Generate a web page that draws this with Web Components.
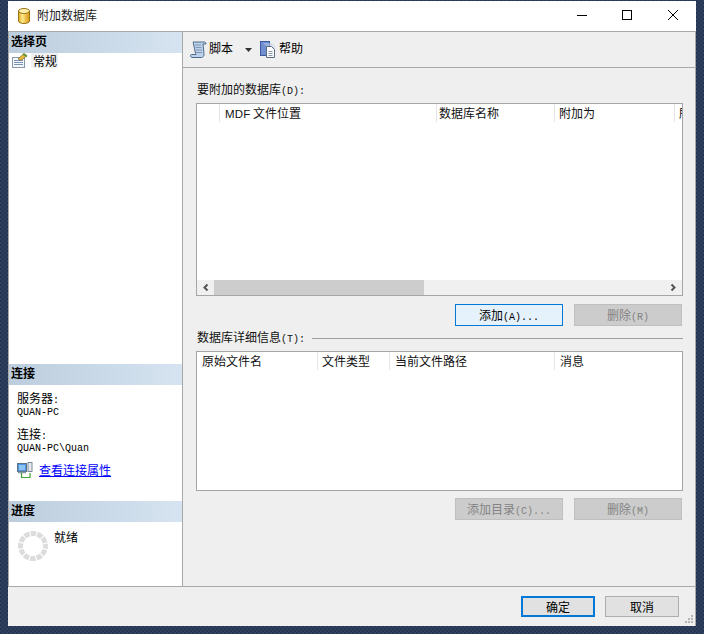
<!DOCTYPE html>
<html lang="zh">
<head>
<meta charset="utf-8">
<title>附加数据库</title>
<style>
    html, body { margin: 0; height: 100%; }
    body {
        box-sizing: border-box;
        padding: 1px 8px 8px 8px;
        background: repeating-conic-gradient(#2f4160 0 25%, #263650 0 50%) 0 0 / 4px 4px;
        font: 12px/12px "Noto Sans CJK SC", "Liberation Sans", sans-serif;
        color: #000;
    }
</style>
</head>
<body>
<attach-dialog>
    <nav-section slot="nav" heading="选择页" grow>
        <page-item>常规</page-item>
    </nav-section>
    <nav-section slot="nav" heading="连接" style="height:137px">
        <conn-info></conn-info>
    </nav-section>
    <nav-section slot="nav" heading="进度" style="height:85px">
        <progress-info>就绪</progress-info>
    </nav-section>

    <tool-bar slot="main"></tool-bar>
    <div slot="main" style="padding:15px 12px 0 13px">
        <div style="height:20px;padding-left:1px;color:#111">要附加的数据库<l-t>(D):</l-t></div>
        <data-grid style="height:193px" scroll>
            <grid-col w="23"></grid-col>
            <grid-col w="217"><span style="font:11.5px/12px 'Liberation Sans',sans-serif;letter-spacing:.15px">MDF</span> 文件位置</grid-col>
            <grid-col w="118" pad="2">数据库名称</grid-col>
            <grid-col w="120" pad="4">附加为</grid-col>
            <grid-col w="60" pad="4" last>所有者</grid-col>
        </data-grid>
        <btn-row style="margin-top:8px">
            <dlg-btn variant="focus"><span>添加<l-t>(A)...</l-t></span></dlg-btn>
            <dlg-btn disabled><span>删除<l-t>(R)</l-t></span></dlg-btn>
        </btn-row>
        <group-rule style="margin-top:6px">数据库详细信息<l-t>(T):</l-t></group-rule>
        <data-grid style="height:140px;margin-top:6px">
            <grid-col w="121">原始文件名</grid-col>
            <grid-col w="72" pad="4">文件类型</grid-col>
            <grid-col w="165">当前文件路径</grid-col>
            <grid-col w="120" last>消息</grid-col>
        </data-grid>
        <btn-row style="margin-top:7px">
            <dlg-btn disabled><span>添加目录<l-t>(C)...</l-t></span></dlg-btn>
            <dlg-btn disabled><span>删除<l-t>(M)</l-t></span></dlg-btn>
        </btn-row>
    </div>

    <dlg-btn slot="foot" variant="default" style="width:74px;height:21px;padding-top:0">确定</dlg-btn>
    <dlg-btn slot="foot" variant="plain" style="width:74px;height:21px;padding-top:0">取消</dlg-btn>
</attach-dialog>

<script>
/* half-width latin in the bitmap-font look: 6px per char */
class LatinText extends HTMLElement {
    constructor() {
        super();
        this.attachShadow({ mode: 'open' }).innerHTML =
            `<style>:host { display: inline; font: 10px/12px "Liberation Mono", monospace; }</style><slot></slot>`;
    }
}

class AttachDialog extends HTMLElement {
    constructor() {
        super();
        this.attachShadow({ mode: 'open' }).innerHTML = `
            <style>
                :host { display: flex; flex-direction: column; height: 625px; background: #efefef; position: relative; }
                .title { height: 30px; flex: none; background: #fff; display: flex; align-items: center; border-bottom: 1px solid #a9a9a9; }
                .title svg.db { margin-left: 10px; }
                .title span { margin: 0 0 2px 7px; color: #1a1a1a; }
                .ctl { margin-left: auto; display: flex; }
                .ctl svg { display: block; }
                .body { flex: none; height: 554px; display: flex; border-bottom: 1px solid #a9a9a9; }
                .nav { width: 173px; flex: none; background: #fff; border-left: 1px solid #a9a9a9; border-right: 1px solid #a9a9a9; display: flex; flex-direction: column; }
                .main { flex: 1; min-width: 0; border-right: 1px solid #a9a9a9; }
                .foot { flex: 1; display: flex; justify-content: flex-end; gap: 10px; padding: 9px 16px 0 0; box-sizing: border-box; border-right: 1px solid #a9a9a9; }
                .grip { position: absolute; right: 2px; bottom: 2px; }
            </style>
            <div class="title">
                <svg class="db" width="12" height="16" viewBox="0 0 12 16">
                    <defs><linearGradient id="g" x1="0" x2="1"><stop offset="0" stop-color="#e0a91e"/><stop offset=".35" stop-color="#ffe98a"/><stop offset="1" stop-color="#d9940f"/></linearGradient></defs>
                    <path d="M.5 3v10c0 1.4 2.5 2.5 5.5 2.5s5.5-1.100 5.5-2.500V3z" fill="url(#g)" stroke="#9a7415"/>
                    <ellipse cx="6" cy="3" rx="5.500" ry="2.500" fill="#fff1ad" stroke="#9a7415"/>
                </svg>
                <span>附加数据库</span>
                <svg class="ctl" width="128" height="30" viewBox="0 0 128 30" fill="none" stroke="#000">
                    <path d="M9 14.500h10"/>
                    <rect x="54.500" y="9.500" width="9" height="9"/>
                    <path d="M100 9l10 10M110 9l-10 10"/>
                </svg>
            </div>
            <div class="body">
                <div class="nav"><slot name="nav"></slot></div>
                <div class="main"><slot name="main"></slot></div>
            </div>
            <div class="foot"><slot name="foot"></slot></div>
            <svg class="grip" width="9" height="9" viewBox="0 0 9 9" fill="#b4b4b4">
                <rect x="6" y="0" width="2" height="2"/><rect x="3" y="3" width="2" height="2"/><rect x="6" y="3" width="2" height="2"/>
                <rect x="0" y="6" width="2" height="2"/><rect x="3" y="6" width="2" height="2"/><rect x="6" y="6" width="2" height="2"/>
            </svg>`;
    }
}

class NavSection extends HTMLElement {
    connectedCallback() {
        if (this.shadowRoot) return;
        this.attachShadow({ mode: 'open' }).innerHTML = `
            <style>
                :host { display: block; flex: none; }
                :host([grow]) { flex: 1; }
                .head {
                    height: 21px; padding: 0 0 3px 2px; box-sizing: border-box; display: flex; align-items: center;
                    background: linear-gradient(90deg, #bccddd, #d6e4f1);
                    font-weight: 700; font-size: 12px;
                }
            </style>
            <div class="head">${this.getAttribute('heading')}</div>
            <slot></slot>`;
    }
}

class PageItem extends HTMLElement {
    constructor() {
        super();
        this.attachShadow({ mode: 'open' }).innerHTML = `
            <style>
                :host { display: flex; align-items: center; height: 15px; padding-left: 3px; }
                svg { flex: none; }
                span { margin-left: 3px; padding: 0 1px 0 2px; height: 15px; line-height: 15px; background: #f0f0f0; }
            </style>
            <svg width="16" height="15" viewBox="0 0 16 15">
                <rect x=".5" y="4.500" width="12" height="10" fill="#f4f7fb" stroke="#8a97a6"/>
                <path d="M2 7.500h9M2 9.500h9M2 11.500h9" stroke="#7b93b5"/>
                <path d="M6 6l6-5.500 3 2-6 5z" fill="#e9b93a" stroke="#7a6a2c" stroke-width=".7"/>
                <path d="M11 1l4 2.500" stroke="#5d9a3c" stroke-width="1.500"/>
            </svg>
            <span><slot></slot></span>`;
    }
}

class ConnInfo extends HTMLElement {
    constructor() {
        super();
        this.attachShadow({ mode: 'open' }).innerHTML = `
            <style>
                :host { display: block; padding: 7px 0 0 8px; line-height: 12px; }
                div { height: 12px; }
                .link { display: flex; align-items: center; margin-top: 10px; height: 17px; }
                a { margin: 0 0 1px 6px; color: #0000ff; text-decoration: underline; }
            </style>
            <div>服务器<l-t>:</l-t></div>
            <div><l-t>QUAN-PC</l-t></div>
            <div></div>
            <div>连接<l-t>:</l-t></div>
            <div><l-t>QUAN-PC\\Quan</l-t></div>
            <div class="link">
                <svg width="16" height="17" viewBox="0 0 16 17">
                    <rect x=".5" y="1.500" width="9" height="8" fill="#4f93e0" stroke="#5f7386"/>
                    <rect x="2" y="3" width="6" height="5" fill="#8cc4f5"/>
                    <rect x="11" y=".5" width="4" height="9" fill="#e6e9ee" stroke="#7e8a96"/>
                    <path d="M1 10.500h8" stroke="#8a96a2" stroke-width="1.500"/>
                    <path d="M4.500 11v4.500h8.500V11" fill="none" stroke="#3fa334" stroke-width="1.200"/>
                </svg>
                <a href="#">查看连接属性</a>
            </div>`;
    }
}

class ProgressInfo extends HTMLElement {
    constructor() {
        super();
        this.attachShadow({ mode: 'open' }).innerHTML = `
            <style>
                :host { display: flex; padding: 9px 0 0 9px; }
                span { margin: 0 0 0 6px; line-height: 12px; }
                svg { flex: none; }
            </style>
            <svg width="30" height="30" viewBox="0 0 30 30">
                <circle cx="15" cy="15" r="12.500" fill="none" stroke="#dcdcdc" stroke-width="5" stroke-dasharray="5.400 1.150" stroke-dashoffset="2.700"/>
            </svg>
            <span><slot></slot></span>`;
    }
}

class ToolBar extends HTMLElement {
    constructor() {
        super();
        this.attachShadow({ mode: 'open' }).innerHTML = `
            <style>
                :host { display: flex; align-items: center; height: 35px; padding-left: 7px; border-bottom: 1px solid #a9a9a9; }
                svg { flex: none; display: block; }
                .caret { margin: 0 8px 0 12px; }
                .txt { margin: 0 0 3px 2px; }
            </style>
            <svg width="17" height="18" viewBox="0 0 17 18">
                <path d="M3 1h11c1.500 0 2 1 2 2h-3l1 10c.2 2-1 3.500-2.500 3.500H2c-1 0-1.500-1-1.500-1.800 0-.7.500-1.200 1-1.200H6l-.5-1L3.500 3C3.300 2 3 1 3 1z" fill="#bdd2ea" stroke="#4f6b8c"/>
                <path d="M5 4h6M5.500 6.500h6M6 9h6M6 11.500h6" stroke="#7f97b4"/>
            </svg>
            <span class="txt">脚本</span>
            <svg class="caret" width="7" height="4" viewBox="0 0 7 4"><path d="M0 0h7L3.500 4z" fill="#333"/></svg>
            <svg width="17" height="17" viewBox="0 0 17 17">
                <rect x=".5" y=".5" width="9" height="14" fill="#6f8fd0" stroke="#3d5a9c"/>
                <path d="M3 2h9l3 3v11H6V5z" fill="#c4cfe8" opacity=".5"/>
                <path d="M6.500 5.500h5l3 3v8h-8z" fill="#fdfdfd" stroke="#5b6b84"/>
                <path d="M8.500 10.500h4M8.500 12.500h4M8.500 14.500h4" stroke="#8b9ab0"/>
            </svg>
            <span class="txt">帮助</span>`;
    }
}

class DataGrid extends HTMLElement {
    connectedCallback() {
        if (this.shadowRoot) return;
        const scroll = this.hasAttribute('scroll') ? `
            <div class="bar">
                <svg width="18" height="15" viewBox="0 0 18 15"><path d="M10.500 4.500L7.500 7.500l3 3" fill="none" stroke="#555" stroke-width="2"/></svg>
                <div class="thumb"></div>
                <svg class="end" width="18" height="15" viewBox="0 0 18 15"><path d="M7.500 4.500l3 3-3 3" fill="none" stroke="#555" stroke-width="2"/></svg>
            </div>` : '';
        this.attachShadow({ mode: 'open' }).innerHTML = `
            <style>
                :host { display: flex; flex-direction: column; box-sizing: border-box; width: 487px; border: 1px solid #a5a5a5; background: #fff; overflow: hidden; }
                .head { display: flex; height: 18px; flex: none; overflow: hidden; }
                .rows { flex: 1; }
                .bar { height: 15px; flex: none; display: flex; background: #f0f0f0; }
                .thumb { width: 210px; background: #cdcdcd; margin-left: -1px; }
                .end { margin-left: auto; }
            </style>
            <div class="head"><slot></slot></div>
            <div class="rows"></div>
            ${scroll}`;
    }
}

class GridCol extends HTMLElement {
    connectedCallback() {
        if (this.shadowRoot) return;
        const w = this.getAttribute('w');
        const pad = this.getAttribute('pad') ?? 5;
        const edge = this.hasAttribute('last') ? 'none' : '1px solid #e4e4e4';
        this.attachShadow({ mode: 'open' }).innerHTML = `
            <style>
                :host {
                    display: block; flex: none; box-sizing: border-box; overflow: hidden; white-space: nowrap;
                    width: ${w}px; padding-left: ${pad}px; border-right: ${edge};
                    line-height: 18px; color: #111;
                }
            </style><slot></slot>`;
    }
}

class BtnRow extends HTMLElement {
    constructor() {
        super();
        this.attachShadow({ mode: 'open' }).innerHTML = `
            <style>:host { display: flex; justify-content: flex-end; gap: 11px; padding-right: 1px; }</style>
            <slot></slot>`;
    }
}

class DlgBtn extends HTMLElement {
    constructor() {
        super();
        this.attachShadow({ mode: 'open' }).innerHTML = `
            <style>
                :host {
                    display: flex; align-items: center; justify-content: center; box-sizing: border-box;
                    width: 108px; height: 22px; padding-top: 2px; background: #e1e1e1; border: 1px solid #adadad; white-space: nowrap;
                }
                :host([variant="focus"]) { background: #e5f1fb; border-color: #0078d7; }
                :host([variant="default"]) { border: 2px solid #0078d7; }
                :host([disabled]) { background: #cccccc; border-color: #bfbfbf; color: #838383; }
            </style>
            <slot></slot>`;
    }
}

class GroupRule extends HTMLElement {
    constructor() {
        super();
        this.attachShadow({ mode: 'open' }).innerHTML = `
            <style>
                :host { display: flex; align-items: center; height: 13px; padding-left: 1px; gap: 7px; color: #111; }
                i { flex: 1; height: 1px; background: #a0a0a0; }
            </style>
            <span><slot></slot></span><i></i>`;
    }
}

customElements.define('l-t', LatinText);
customElements.define('attach-dialog', AttachDialog);
customElements.define('nav-section', NavSection);
customElements.define('page-item', PageItem);
customElements.define('conn-info', ConnInfo);
customElements.define('progress-info', ProgressInfo);
customElements.define('tool-bar', ToolBar);
customElements.define('data-grid', DataGrid);
customElements.define('grid-col', GridCol);
customElements.define('btn-row', BtnRow);
customElements.define('dlg-btn', DlgBtn);
customElements.define('group-rule', GroupRule);
</script>
</body>
</html>
